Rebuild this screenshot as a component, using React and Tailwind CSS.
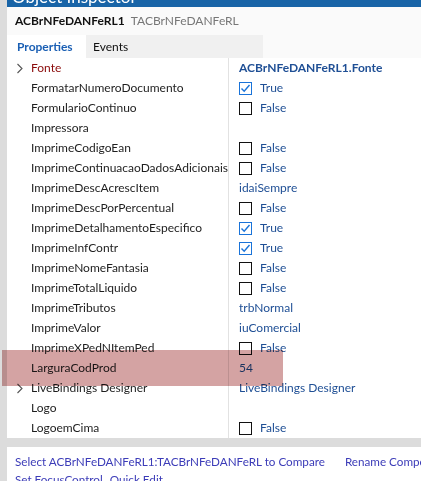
import React from 'react'

const rows = [
  { name: 'Fonte', expand: true, red: true, value: 'ACBrNFeDANFeRL1.Fonte', bold: true },
  { name: 'FormatarNumeroDocumento', check: true },
  { name: 'FormularioContinuo', check: false },
  { name: 'Impressora' },
  { name: 'ImprimeCodigoEan', check: false },
  { name: 'ImprimeContinuacaoDadosAdicionais', check: false },
  { name: 'ImprimeDescAcrescItem', value: 'idaiSempre' },
  { name: 'ImprimeDescPorPercentual', check: false },
  { name: 'ImprimeDetalhamentoEspecifico', check: true },
  { name: 'ImprimeInfContr', check: true },
  { name: 'ImprimeNomeFantasia', check: false },
  { name: 'ImprimeTotalLiquido', check: false },
  { name: 'ImprimeTributos', value: 'trbNormal' },
  { name: 'ImprimeValor', value: 'iuComercial' },
  { name: 'ImprimeXPedNItemPed', check: false },
  { name: 'LarguraCodProd', value: '54' },
  { name: 'LiveBindings Designer', expand: true, value: 'LiveBindings Designer' },
  { name: 'Logo' },
  { name: 'LogoemCima', check: false },
]

function Checkbox({ checked }) {
  if (checked) {
    return (
      <span className="w-[13px] h-[13px] border border-[#1a73d8] flex items-center justify-center">
        <svg width="11" height="11" viewBox="0 0 11 11">
          <path d="M1.5 5.5 L4.2 8.3 L9.5 2" fill="none" stroke="#1a73d8" strokeWidth="1.4" />
        </svg>
      </span>
    )
  }
  return <span className="w-[13px] h-[13px] border border-[#111]" />
}

function Chevron() {
  return (
    <svg width="8" height="11" viewBox="0 0 8 11" className="absolute left-[9px] top-[5px]">
      <path d="M1.5 1 L6 5.5 L1.5 10" fill="none" stroke="#555" strokeWidth="1.1" />
    </svg>
  )
}

export default function App() {
  return (
    <div className="w-[421px] h-[481px] overflow-hidden bg-[#dcdcdc] relative text-[12px]" style={{ fontFamily: 'Lato, "Open Sans", sans-serif' }}>
      <div className="ml-[7px] flex flex-col">
        {/* title bar, mostly scrolled off */}
        <div className="h-[7px] bg-[#1864a7] overflow-hidden">
          <div className="text-white text-[17px] leading-[20px] -mt-[13px] pl-[5px]">Object Inspector</div>
        </div>

        {/* component name */}
        <div className="h-[28px] bg-[#fafafa] flex items-center gap-[6px] pl-[8px]">
          <span className="font-bold text-[#111]">ACBrNFeDANFeRL1</span>
          <span className="text-[#777]">TACBrNFeDANFeRL</span>
        </div>

        {/* tabs */}
        <div className="h-[23px] flex bg-[#fafafa]">
          <div className="w-[79px] bg-white flex items-end pb-[2px] pl-[10px] text-[#1a5fb4] font-bold">Properties</div>
          <div className="w-[177px] bg-[#f0f0f0] flex items-end pb-[2px] pl-[7px] text-[#111]">Events</div>
        </div>

        {/* property grid */}
        <div className="bg-white flex flex-col">
          {rows.map((r) => (
            <div key={r.name} className="h-[20px] flex">
              <div className="w-[222px] relative border-r border-[#e2e2e2] overflow-hidden whitespace-nowrap pl-[24px] leading-[20px]">
                {r.expand && <Chevron />}
                <span className={r.red ? 'text-[#8b0a0a]' : 'text-[#1e1e1e]'}>{r.name}</span>
              </div>
              <div className="flex-1 pl-[10px] flex items-center gap-[8px] text-[#1f4f95] whitespace-nowrap">
                {r.check !== undefined && <Checkbox checked={r.check} />}
                {r.check !== undefined && <span>{r.check ? 'True' : 'False'}</span>}
                {r.value && <span className={r.bold ? 'font-bold' : ''}>{r.value}</span>}
              </div>
            </div>
          ))}
        </div>

        {/* bottom links */}
        <div className="mt-[9px] bg-white h-[40px] pl-[8px] pt-[5px] text-[#3c3cb8] text-[11.7px] leading-[18px] whitespace-nowrap">
          <div className="flex gap-[20px]">
            <span>Select ACBrNFeDANFeRL1:TACBrNFeDANFeRL to Compare</span>
            <span>Rename Component</span>
          </div>
          <div className="flex gap-[7px]">
            <span>Set FocusControl</span>
            <span>Quick Edit</span>
          </div>
        </div>
      </div>

      {/* annotation overlay */}
      <div className="absolute left-[2px] top-[350px] w-[281px] h-[36px] bg-[#d4a3a3] mix-blend-multiply" />
    </div>
  )
}
